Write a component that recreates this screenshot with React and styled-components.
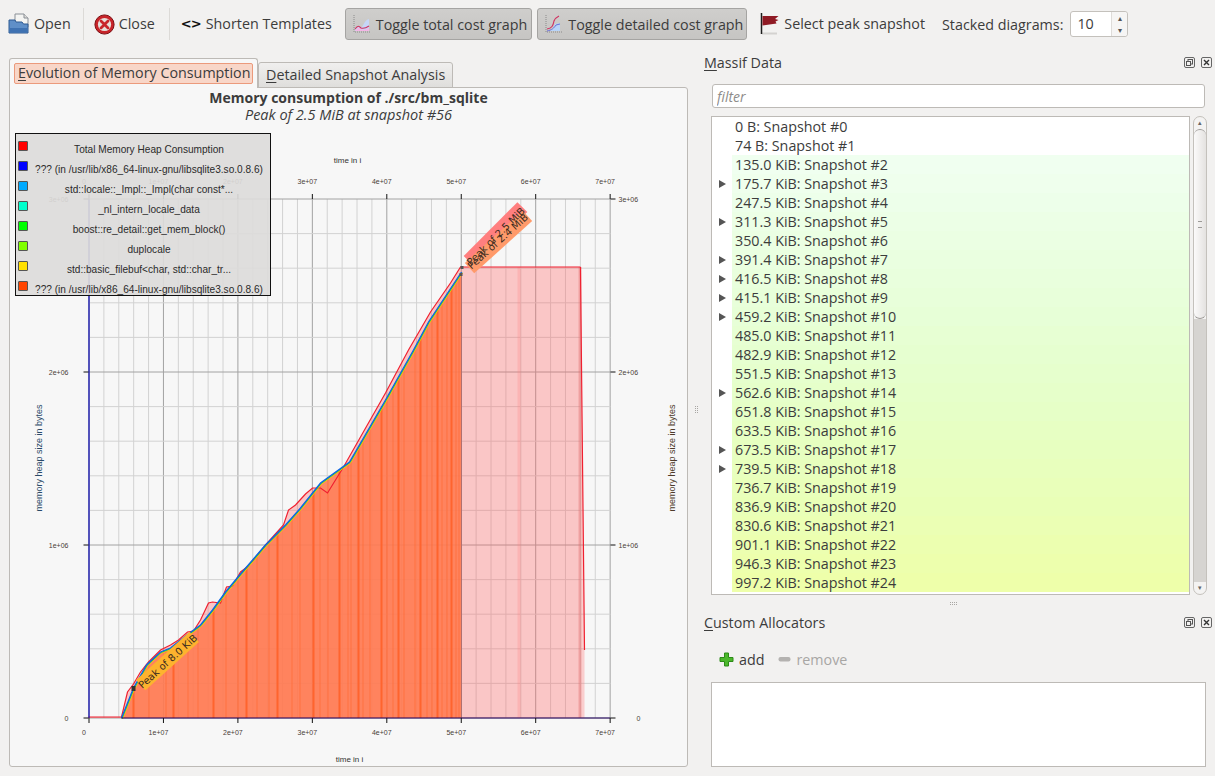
import React from 'react';
import styled, { createGlobalStyle } from 'styled-components';

const GlobalStyle = createGlobalStyle`
  html, body {
    margin: 0;
    padding: 0;
    width: 1215px;
    height: 776px;
    overflow: hidden;
    background: #f2f1f0;
  }
  * { box-sizing: border-box; }
`;

const snapshots = [
  ['0 B', 0], ['74 B', 1], ['135.0 KiB', 2], ['175.7 KiB', 3, true], ['247.5 KiB', 4],
  ['311.3 KiB', 5, true], ['350.4 KiB', 6], ['391.4 KiB', 7, true], ['416.5 KiB', 8, true],
  ['415.1 KiB', 9, true], ['459.2 KiB', 10, true], ['485.0 KiB', 11], ['482.9 KiB', 12],
  ['551.5 KiB', 13], ['562.6 KiB', 14, true], ['651.8 KiB', 15], ['633.5 KiB', 16],
  ['673.5 KiB', 17, true], ['739.5 KiB', 18, true], ['736.7 KiB', 19], ['836.9 KiB', 20],
  ['830.6 KiB', 21], ['901.1 KiB', 22], ['946.3 KiB', 23], ['997.2 KiB', 24],
];

const legend = [
  ['#ff0000', 'Total Memory Heap Consumption'],
  ['#0000ff', '??? (in /usr/lib/x86_64-linux-gnu/libsqlite3.so.0.8.6)'],
  ['#00aaff', 'std::locale::_Impl::_Impl(char const*...'],
  ['#00ffcc', '_nl_intern_locale_data'],
  ['#00ff00', 'boost::re_detail::get_mem_block()'],
  ['#80ff00', 'duplocale'],
  ['#ffe000', 'std::basic_filebuf<char, std::char_tr...'],
  ['#ff4500', '??? (in /usr/lib/x86_64-linux-gnu/libsqlite3.so.0.8.6)'],
];

const rowTint = (kib) => {
  if (kib < 2) return '#ffffff';
  const t = (kib - 2) / 22;
  const r = Math.round(240 - 9 * Math.sin(t * Math.PI) + (238 - 240) * t);
  const b = Math.round(240 - 70 * t);
  return `rgb(${r},255,${b})`;
};

const xAt = (v) => 88.5 + v * 74.45;
const yAt = (v) => 718 - v * 173;

const totalCurve = [
  [88, 717], [121, 717], [127, 692], [133, 684], [140, 672], [148, 662], [160, 650], [170, 645],
  [178, 640], [187, 632], [193, 631], [200, 620], [208, 603], [212, 602], [220, 603], [226, 587],
  [232, 586], [240, 572], [248, 566], [265, 545], [283, 525], [288, 510], [295, 505], [305, 494],
  [312, 488], [320, 488], [327, 493], [343, 467], [360, 437], [385, 393], [408, 350], [430, 312],
  [450, 283], [460, 267], [580, 267],
];

const stackCurve = [
  [121, 718], [133, 688], [146, 665], [160, 652], [170, 648], [185, 636], [200, 625], [212, 610],
  [225, 592], [240, 574], [265, 545], [285, 525], [300, 508], [320, 483], [349, 462], [385, 400],
  [413, 350], [428, 322], [461, 272],
];

const toPoints = (pts, dx = 0, dy = 0) => pts.map(([x, y]) => `${x + dx},${y + dy}`).join(' ');

// snapshot stripes, spread the way the tool draws them
const stripes = [
  132, 148, 165, 172, 187, 197, 212, 225, 237, 245, 256, 268, 276, 291, 299, 312, 319, 327, 338, 347,
  350, 357, 362, 369, 380, 386, 392, 397, 403, 414, 419, 426, 431, 436, 441, 446, 450, 455, 458,
];

const Grid = () => {
  const lines = [];
  for (let i = 0; i <= 35; i++) {
    const x = xAt(i / 5);
    const major = i % 5 === 0;
    lines.push(<line key={`v${i}`} x1={x} x2={x} y1={199} y2={718} stroke={major ? '#a2a2a2' : '#d2d2d2'} />);
  }
  for (let i = 0; i <= 15; i++) {
    const y = yAt(i / 5);
    const major = i % 5 === 0;
    lines.push(<line key={`h${i}`} x1={88} x2={610} y1={y} y2={y} stroke={major ? '#a2a2a2' : '#d2d2d2'} />);
  }
  return lines;
};

const Ticks = () => {
  const out = [];
  for (let i = 0; i <= 7; i++) {
    const x = xAt(i);
    const label = i === 0 ? '0' : `${i}e+07`;
    out.push(<line key={`tb${i}`} x1={x} x2={x} y1={718} y2={723} stroke="#111" />);
    out.push(<line key={`tt${i}`} x1={x} x2={x} y1={194} y2={199} stroke="#111" />);
    out.push(<TickText key={`lb${i}`} x={x - 5} y={735} textAnchor="middle">{label}</TickText>);
    out.push(<TickText key={`lt${i}`} x={x - 5} y={184} textAnchor="middle">{label}</TickText>);
  }
  for (let i = 0; i <= 3; i++) {
    const y = yAt(i);
    const label = i === 0 ? '0' : `${i}e+06`;
    out.push(<line key={`tl${i}`} x1={83} x2={88} y1={y} y2={y} stroke="#111" />);
    out.push(<line key={`tr${i}`} x1={610} x2={615} y1={y} y2={y} stroke="#111" />);
    out.push(<TickText key={`ll${i}`} x={68} y={y + 3} textAnchor="end">{label}</TickText>);
    out.push(<TickText key={`lr${i}`} x={i === 0 ? 636 : 618} y={y + 3}>{label}</TickText>);
  }
  return out;
};

const PeakBack = ({ cx, cy, w, angle, fill }) => (
  <rect x={cx - w / 2} y={cy - 7} width={w} height={14} fill={fill} transform={`rotate(${angle} ${cx} ${cy})`} />
);

const PeakLabel = ({ cx, cy, angle, children }) => (
  <PeakText x={cx} y={cy + 4} textAnchor="middle" transform={`rotate(${angle} ${cx} ${cy})`}>{children}</PeakText>
);

const Chart = () => (
  <ChartSvg viewBox="10 124 676 642">
    <defs>
      <clipPath id="stackClip">
        <polygon points={`${toPoints(stackCurve)} 461,718`} />
      </clipPath>
    </defs>
    <AxisTitle x={347} y={163} textAnchor="middle">time in i</AxisTitle>
    <AxisTitle x={349} y={762} textAnchor="middle">time in i</AxisTitle>
    <SideTitle transform="translate(41 458) rotate(-90)" textAnchor="middle">memory heap size in bytes</SideTitle>
    <SideTitle transform="translate(674 458) rotate(-90)" textAnchor="middle" $warm>memory heap size in bytes</SideTitle>
    <Grid />
    <polygon points={`${toPoints(totalCurve)} 580,718 88,718`} fill="#ff6868" fillOpacity="0.34" />
    <polygon points="580,267 584,650 584,718 580,718" fill="#ff8080" fillOpacity="0.35" />
    <rect x={578} y={267} width={3} height={451} fill="#e06060" fillOpacity="0.35" />
    <rect x={517} y={267} width={3} height={451} fill="#ff8080" fillOpacity="0.25" />
    <polygon points={`${toPoints(stackCurve)} 461,718`} fill="#ff7a50" fillOpacity="0.88" />
    <g clipPath="url(#stackClip)">
      {stripes.map((x, i) => (
        <rect key={x} x={x} y={260} width={i % 3 === 0 ? 2 : 1} height={460} fill="#ff5f26" fillOpacity={i % 3 === 0 ? 0.85 : 0.5} />
      ))}
    </g>
    <line x1={461} x2={461} y1={272} y2={718} stroke="#b07070" />
    <polyline points={toPoints(totalCurve)} fill="none" stroke="#f02030" strokeWidth="1.2" />
    <polyline points="580,267 580,270 584,650" fill="none" stroke="#f02030" strokeWidth="1.2" />
    <polyline points={toPoints(stackCurve, 1, 1)} fill="none" stroke="#e8d000" strokeWidth="1" />
    <polyline points={toPoints(stackCurve, 0.5, 0.5)} fill="none" stroke="#20d040" strokeWidth="1" />
    <polyline points={toPoints(stackCurve)} fill="none" stroke="#0a64e6" strokeWidth="1.3" />
    <line x1={88.5} x2={88.5} y1={199} y2={718} stroke="#0000b0" strokeWidth="1.2" />
    <line x1={121} x2={610} y1={718} y2={718} stroke="#200060" />
    <Ticks />
    <PeakBack cx={167} cy={661} w={72} angle={-42} fill="#fdb32e" />
    <PeakLabel cx={167} cy={661} angle={-42}>Peak of 8.0 KiB</PeakLabel>
    <rect x={131} y={686} width={4} height={5} fill="#333" />
    <PeakBack cx={495} cy={234} w={76} angle={-45} fill="#ff7f7f" />
    <PeakBack cx={498} cy={242} w={78} angle={-42} fill="#ff9a6a" />
    <PeakLabel cx={495} cy={236} angle={-45}>Peak of 2.5 MiB</PeakLabel>
    <PeakLabel cx={497} cy={241} angle={-42}>Peak of 2.4 MiB</PeakLabel>
    <rect x={460} y={266} width={3} height={3} fill="#555" />
    <rect x={459} y={273} width={3} height={3} fill="#555" />
  </ChartSvg>
);

const OpenIcon = () => (
  <svg width="22" height="22" viewBox="0 0 22 22">
    <path d="M7 1h9l4 4v9H7z" fill="#f4f4f2" stroke="#8a8f96" />
    <path d="M16 1v4h4" fill="#dcdcd8" stroke="#8a8f96" />
    <path d="M1 7h6l1 2h6l1.500 2H20v9H1z" fill="#5f8fc8" stroke="#2e5a92" />
    <path d="M1.500 15h18v4.500h-18z" fill="#3f72b2" />
  </svg>
);

const CloseIcon = () => (
  <svg width="21" height="21" viewBox="0 0 21 21">
    <circle cx="10.500" cy="10.500" r="9.600" fill="#c8242a" stroke="#7c1014" />
    <circle cx="10.500" cy="10.500" r="6.600" fill="#e6e0dc" />
    <path d="M7 7l7 7M14 7l-7 7" stroke="#c8242a" strokeWidth="2.800" strokeLinecap="round" />
  </svg>
);

const CostIcon = ({ detailed }) => (
  <svg width="20" height="20" viewBox="0 0 20 20">
    <path d="M3 1v17h16" fill="none" stroke="#8a8a8a" strokeDasharray="1 1" />
    {detailed ? (
      <>
        <path d="M4 17c5 0 6-2 8-7l5-1v8z" fill="#b8d4f8" />
        <path d="M4 15c5-1 6-3 7-8 1-3 3-4 5-5" fill="none" stroke="#d03060" strokeWidth="1.200" />
        <path d="M4 17c5-1 7-3 9-6l4-1" fill="none" stroke="#6a70d8" />
      </>
    ) : (
      <>
        <path d="M4 16c3-5 5-2 7-3 2-3 3-7 7-8v12H4z" fill="#c6d6f6" />
        <path d="M4 17c3-4 4-4 6-2 3 2 5 0 8-1v3z" fill="#f4b6e6" />
        <path d="M4 15c3-4 4-3 6-1 3 1 5 0 8-2" fill="none" stroke="#d03060" strokeWidth="1.100" />
      </>
    )}
  </svg>
);

const FlagIcon = () => (
  <svg width="20" height="22" viewBox="0 0 20 22">
    <path d="M2 20.500h15" stroke="#d4d2d0" strokeWidth="2" />
    <path d="M1.500 0v21" stroke="#1c1c1c" strokeWidth="1.500" />
    <path d="M2.500 3h16l-3.500 3 3.500 1-3 1.500 1 2-14 2z" fill="#8f1a24" />
  </svg>
);

const DockIcons = () => (
  <DockButtons>
    <svg width="11" height="11" viewBox="0 0 11 11">
      <rect x=".5" y=".5" width="10" height="10" rx="1.500" fill="none" stroke="#666" />
      <rect x="4" y="2.500" width="4.500" height="4.500" fill="none" stroke="#555" />
      <rect x="2.500" y="4.500" width="4" height="4" fill="#f2f1f0" stroke="#555" />
    </svg>
    <svg width="11" height="11" viewBox="0 0 11 11">
      <rect x=".5" y=".5" width="10" height="10" rx="1.500" fill="none" stroke="#666" />
      <path d="M3 3l5 5M8 3l-5 5" stroke="#333" strokeWidth="1.400" />
    </svg>
  </DockButtons>
);

export default function App() {
  return (
    <>
      <GlobalStyle />
      <Page>
        <Toolbar>
          <ToolButton>
            <OpenIcon />
            <span>Open</span>
          </ToolButton>
          <Separator $before={12} $after={10} />
          <ToolButton>
            <CloseIcon />
            <span>Close</span>
          </ToolButton>
          <Separator $before={14} $after={11} />
          <ToolButton>
            <CodeGlyph>&lt;&gt;</CodeGlyph>
            <span>Shorten Templates</span>
          </ToolButton>
          <ToggleButton $first>
            <CostIcon />
            <span>Toggle total cost graph</span>
          </ToggleButton>
          <ToggleButton>
            <CostIcon detailed />
            <span>Toggle detailed cost graph</span>
          </ToggleButton>
          <FlagButton>
            <FlagIcon />
            <span>Select peak snapshot</span>
          </FlagButton>
          <SpinLabel>Stacked diagrams:</SpinLabel>
          <SpinBox>
            <SpinValue>10</SpinValue>
            <SpinArrows>
              <SpinArrow>▴</SpinArrow>
              <SpinArrow>▾</SpinArrow>
            </SpinArrows>
          </SpinBox>
        </Toolbar>
        <Main>
          <Tabs>
            <TabBar>
              <ActiveTab>
                <FocusLabel><u>E</u>volution of Memory Consumption</FocusLabel>
              </ActiveTab>
              <Tab><u>D</u>etailed Snapshot Analysis</Tab>
            </TabBar>
            <Pane>
              <ChartTitle>Memory consumption of ./src/bm_sqlite</ChartTitle>
              <ChartSubtitle>Peak of 2.5 MiB at snapshot #56</ChartSubtitle>
              <ChartArea>
                <Chart />
                <Legend>
                  {legend.map(([color, label], i) => (
                    <LegendRow key={i}>
                      <Swatch $color={color} />
                      <LegendText>{label}</LegendText>
                    </LegendRow>
                  ))}
                </Legend>
              </ChartArea>
            </Pane>
          </Tabs>
          <VSplitter>
            <Grip $vertical />
          </VSplitter>
          <Docks>
            <DockHeader>
              <span><u>M</u>assif Data</span>
              <DockIcons />
            </DockHeader>
            <FilterInput placeholder="filter" readOnly />
            <ListRow>
              <SnapshotList>
                {snapshots.map(([cost, id, expandable]) => (
                  <SnapshotRow key={id}>
                    <ExpandCell>{expandable && <Expander />}</ExpandCell>
                    <SnapshotLabel $bg={rowTint(id)}>{cost}: Snapshot #{id}</SnapshotLabel>
                  </SnapshotRow>
                ))}
              </SnapshotList>
              <ScrollBar>
                <ScrollStep>▴</ScrollStep>
                <ScrollThumb />
                <ScrollSpace />
                <ScrollStep>▾</ScrollStep>
              </ScrollBar>
            </ListRow>
            <HSplitter>
              <Grip />
            </HSplitter>
            <DockHeader>
              <span><u>C</u>ustom Allocators</span>
              <DockIcons />
            </DockHeader>
            <AllocatorTools>
              <AllocatorButton>
                <svg width="15" height="15" viewBox="0 0 15 15">
                  <path d="M5.500 1h4v4.500H14v4H9.500V14h-4V9.500H1v-4h4.500z" fill="#4cb82c" stroke="#2c8a18" />
                </svg>
                add
              </AllocatorButton>
              <AllocatorButton $disabled>
                <svg width="13" height="7" viewBox="0 0 13 7">
                  <rect x=".5" y="1" width="12" height="4.500" rx="2" fill="#b4b2b0" />
                </svg>
                remove
              </AllocatorButton>
            </AllocatorTools>
            <AllocatorList />
          </Docks>
        </Main>
      </Page>
    </>
  );
}

const uiFont = `'Open Sans', 'Noto Sans', sans-serif`;

const Page = styled.div`
  width: 1215px;
  height: 776px;
  display: flex;
  flex-direction: column;
  font-family: ${uiFont};
  font-size: 14.3px;
  color: #3c3c3c;
  u { text-underline-offset: 2px; text-decoration-thickness: 1px; }
`;

const Toolbar = styled.div`
  height: 48px;
  padding: 8px 0 8px 8px;
  display: flex;
  align-items: center;
  flex: none;
`;

const ToolButton = styled.div`
  display: flex;
  align-items: center;
  gap: 4px;
  white-space: nowrap;
  span { margin-bottom: 2px; }
`;

const Separator = styled.div`
  width: 1px;
  height: 32px;
  margin: 0 ${(p) => p.$after}px 0 ${(p) => p.$before}px;
  background: #dcdad7;
`;

const CodeGlyph = styled.span`
  width: 21px;
  font-family: 'DejaVu Sans', sans-serif;
  font-weight: 700;
  font-size: 13px;
  color: #111;
  letter-spacing: -1px;
`;

const ToggleButton = styled(ToolButton)`
  height: 32px;
  margin-left: ${(p) => (p.$first ? '13px' : '5px')};
  padding: 0 ${(p) => (p.$first ? '4px' : '3px')} 0 5px;
  gap: 5px;
  border: 1px solid #a5a4a2;
  border-radius: 3px;
  background: linear-gradient(#cfcecc, #c6c5c3);
  span { margin-bottom: 0; }
`;

const FlagButton = styled(ToolButton)`
  margin-left: 13px;
  gap: 4px;
`;

const SpinLabel = styled.span`
  margin-left: 17px;
  white-space: nowrap;
`;

const SpinBox = styled.div`
  width: 58px;
  height: 26px;
  margin-left: 7px;
  display: flex;
  border: 1px solid #c4c1bc;
  border-radius: 3px;
  background: #fff;
`;

const SpinValue = styled.div`
  flex: 1;
  padding-left: 6px;
  line-height: 24px;
`;

const SpinArrows = styled.div`
  width: 16px;
  display: flex;
  flex-direction: column;
  border-left: 1px solid #dedcd9;
  background: #f6f5f4;
  border-radius: 0 3px 3px 0;
`;

const SpinArrow = styled.div`
  flex: 1;
  font-size: 8px;
  line-height: 12px;
  text-align: center;
  color: #555;
`;

const Main = styled.div`
  flex: 1;
  min-height: 0;
  display: flex;
  padding: 4px 3px 9px 9px;
`;

const Tabs = styled.div`
  width: 679px;
  margin-top: 6px;
  display: flex;
  flex-direction: column;
  flex: none;
`;

const TabBar = styled.div`
  height: 30px;
  display: flex;
  align-items: flex-end;
  flex: none;
  margin-bottom: -1px;
`;

const ActiveTab = styled.div`
  width: 249px;
  height: 30px;
  padding: 4px 4px 0;
  background: #f7f7f7;
  border: 1px solid #bdbab6;
  border-bottom: none;
  border-radius: 3px 3px 0 0;
  position: relative;
  z-index: 1;
`;

const FocusLabel = styled.div`
  height: 21px;
  padding-left: 3px;
  line-height: 17px;
  white-space: nowrap;
  border: 1px solid #eb9a7c;
  border-radius: 2px;
  background: #f8d6c8;
`;

const Tab = styled.div`
  width: 195px;
  height: 26px;
  padding-left: 7px;
  line-height: 23px;
  white-space: nowrap;
  border: 1px solid #bdbab6;
  border-radius: 3px 3px 0 0;
  background: linear-gradient(#f0efee, #dfdedc);
`;

const Pane = styled.div`
  flex: 1;
  min-height: 0;
  display: flex;
  flex-direction: column;
  background: #f7f7f7;
  border: 1px solid #bdbab6;
  border-radius: 0 3px 3px 3px;
`;

const ChartTitle = styled.div`
  margin-top: 1px;
  height: 18px;
  line-height: 18px;
  text-align: center;
  font-size: 14px;
  font-weight: 700;
`;

const ChartSubtitle = styled.div`
  height: 17px;
  line-height: 15px;
  text-align: center;
  font-size: 14.500px;
  font-style: italic;
`;

const ChartArea = styled.div`
  flex: 1;
  min-height: 0;
  position: relative;
`;

const ChartSvg = styled.svg`
  display: block;
  width: 100%;
  height: 100%;
`;

const TickText = styled.text`
  font-family: 'Liberation Sans', sans-serif;
  font-size: 7px;
  fill: #4a4038;
`;

const AxisTitle = styled.text`
  font-family: 'Liberation Sans', sans-serif;
  font-size: 8px;
  fill: #333;
`;

const SideTitle = styled(AxisTitle)`
  font-size: 9px;
  fill: ${(p) => (p.$warm ? '#4e3a2a' : '#2a4a68')};
`;

const PeakText = styled.text`
  font-family: 'DejaVu Sans', sans-serif;
  font-size: 10px;
  fill: #3a2a20;
`;

const Legend = styled.div`
  position: absolute;
  left: 5px;
  top: 9px;
  width: 256px;
  height: 163px;
  padding-top: 4px;
  border: 1px solid #111;
  background: rgba(220, 219, 218, 0.92);
  font-family: 'Liberation Sans', sans-serif;
  font-size: 10.100px;
  color: #2a2a2a;
`;

const LegendRow = styled.div`
  height: 20px;
  display: flex;
`;

const Swatch = styled.div`
  width: 10px;
  height: 10px;
  margin: 3px 0 0 2px;
  flex: none;
  background: ${(p) => p.$color};
  border: 1px solid #555;
  border-radius: 1px;
`;

const LegendText = styled.div`
  flex: 1;
  padding-top: 6px;
  text-align: center;
  white-space: nowrap;
`;

const VSplitter = styled.div`
  width: 16px;
  flex: none;
  display: flex;
  align-items: center;
  justify-content: center;
`;

const Grip = styled.div`
  width: ${(p) => (p.$vertical ? '1px' : '7px')};
  height: ${(p) => (p.$vertical ? '7px' : '1px')};
  border-style: dotted;
  border-color: #a8a6a3;
  border-width: ${(p) => (p.$vertical ? '0 1px 0 1px' : '1px 0 1px 0')};
  box-sizing: content-box;
`;

const Docks = styled.div`
  flex: 1;
  min-width: 0;
  display: flex;
  flex-direction: column;
`;

const DockHeader = styled.div`
  height: 20px;
  display: flex;
  align-items: center;
  justify-content: space-between;
  flex: none;
`;

const DockButtons = styled.div`
  display: flex;
  gap: 6px;
`;

const FilterInput = styled.input`
  width: 493px;
  height: 24px;
  margin: 12px 0 8px 8px;
  padding: 0 4px;
  flex: none;
  font-family: ${uiFont};
  font-size: 14px;
  font-style: italic;
  color: #3c3c3c;
  background: #fff;
  border: 1px solid #bdbab6;
  border-radius: 3px;
  outline: none;
  &::placeholder { color: #8e8c8a; opacity: 1; }
`;

const ListRow = styled.div`
  height: 479px;
  margin-left: 7px;
  display: flex;
  gap: 3px;
  flex: none;
`;

const SnapshotList = styled.div`
  width: 479px;
  background: #fff;
  border: 1px solid #bdbab6;
  overflow: hidden;
`;

const SnapshotRow = styled.div`
  height: 19px;
  display: flex;
`;

const ExpandCell = styled.div`
  width: 20px;
  flex: none;
  display: flex;
  align-items: center;
  justify-content: center;
`;

const Expander = styled.div`
  width: 0;
  height: 0;
  border-style: solid;
  border-width: 4px 0 4px 7px;
  border-color: transparent transparent transparent #555;
`;

const SnapshotLabel = styled.div`
  flex: 1;
  padding-left: 3px;
  line-height: 19px;
  background: ${(p) => p.$bg};
`;

const ScrollBar = styled.div`
  width: 14px;
  height: 479px;
  display: flex;
  flex-direction: column;
  background: #f4f3f2;
  border: 1px solid #c4c1bc;
  border-radius: 7px;
  overflow: hidden;
`;

const ScrollStep = styled.div`
  height: 12px;
  font-size: 7px;
  line-height: 12px;
  text-align: center;
  color: #666;
  flex: none;
`;

const ScrollThumb = styled.div`
  height: 190px;
  flex: none;
  display: flex;
  align-items: center;
  justify-content: center;
  background: linear-gradient(90deg, #fbfafa, #e4e2e0);
  border: 1px solid #9c9a97;
  border-width: 1px 0;
  border-radius: 6px;
  &::after {
    content: '';
    width: 4px;
    height: 5px;
    border-top: 1px solid #9c9a97;
    border-bottom: 1px solid #9c9a97;
    box-sizing: content-box;
  }
`;

const ScrollSpace = styled.div`
  flex: 1;
  background: #d6d4d1;
`;

const HSplitter = styled.div`
  height: 17px;
  flex: none;
  display: flex;
  align-items: center;
  justify-content: center;
  padding-right: 10px;
`;

const AllocatorTools = styled.div`
  height: 38px;
  margin: 8px 0 4px;
  padding-left: 15px;
  display: flex;
  align-items: center;
  gap: 14px;
  flex: none;
`;

const AllocatorButton = styled.div`
  display: flex;
  align-items: center;
  gap: 5px;
  color: ${(p) => (p.$disabled ? '#a8a6a4' : '#3c3c3c')};
`;

const AllocatorList = styled.div`
  width: 495px;
  height: 85px;
  margin-left: 7px;
  background: #fff;
  border: 1px solid #bdbab6;
`;
